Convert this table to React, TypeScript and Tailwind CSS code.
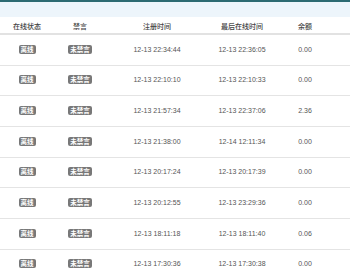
import React from 'react';

interface UserRow {
  online: string;
  mute: string;
  registered: string;
  lastSeen: string;
  balance: string;
}

const rows: UserRow[] = [
  { online: '离线', mute: '未禁言', registered: '12-13 22:34:44', lastSeen: '12-13 22:36:05', balance: '0.00' },
  { online: '离线', mute: '未禁言', registered: '12-13 22:10:10', lastSeen: '12-13 22:10:33', balance: '0.00' },
  { online: '离线', mute: '未禁言', registered: '12-13 21:57:34', lastSeen: '12-13 22:37:06', balance: '2.36' },
  { online: '离线', mute: '未禁言', registered: '12-13 21:38:00', lastSeen: '12-14 12:11:34', balance: '0.00' },
  { online: '离线', mute: '未禁言', registered: '12-13 20:17:24', lastSeen: '12-13 20:17:39', balance: '0.00' },
  { online: '离线', mute: '未禁言', registered: '12-13 20:12:55', lastSeen: '12-13 23:29:36', balance: '0.00' },
  { online: '离线', mute: '未禁言', registered: '12-13 18:11:18', lastSeen: '12-13 18:11:40', balance: '0.06' },
  { online: '离线', mute: '未禁言', registered: '12-13 17:30:36', lastSeen: '12-13 17:30:38', balance: '0.00' },
];

const cols = 'grid grid-cols-[54px_52px_102px_68px_58px_1fr] items-center';

const Badge: React.FC<{ label: string }> = ({ label }) => (
  <span className="inline-block rounded-[2px] bg-[#787878] px-[2px] text-[6.5px] font-semibold leading-[9px] text-white">
    {label}
  </span>
);

export default function App() {
  return (
    <div
      className="h-[280px] w-[350px] overflow-hidden bg-white text-[#555]"
      style={{ fontFamily: '"Liberation Sans", "Noto Sans CJK SC", sans-serif' }}
    >
      <div className="h-[2px] bg-[#2c6a72]" />
      <div className="h-[15px] bg-[#edf5fb]" />
      <div className={`${cols} h-[18px] border-b-2 border-[#e2e2e2] pt-[4px] text-[7px] font-medium text-[#444]`}>
        <div className="text-center">在线状态</div>
        <div className="text-center">禁言</div>
        <div className="text-center">注册时间</div>
        <div className="text-center">最后在线时间</div>
        <div className="text-center">余额</div>
        <div />
      </div>
      {rows.map((r, i) => (
        <div key={i} className={`${cols} h-[30.7px] border-b border-[#e4e4e4] text-[7px]`}>
          <div className="text-center"><Badge label={r.online} /></div>
          <div className="text-center"><Badge label={r.mute} /></div>
          <div className="text-center">{r.registered}</div>
          <div className="text-center">{r.lastSeen}</div>
          <div className="text-center">{r.balance}</div>
          <div />
        </div>
      ))}
    </div>
  );
}
